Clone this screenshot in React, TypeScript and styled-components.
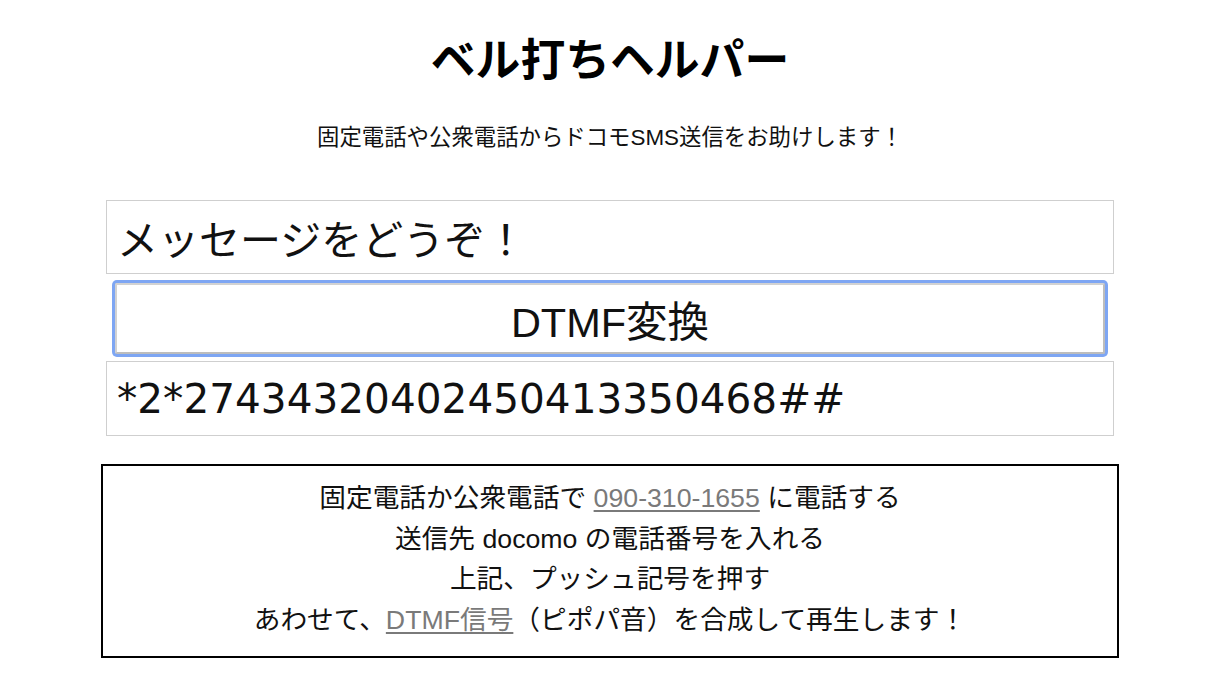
import React, { useState } from "react";
import styled, { createGlobalStyle } from "styled-components";

const Global = createGlobalStyle`
  html, body { margin: 0; padding: 0; background: #fff; }
  body {
    font-family: "Liberation Sans", "Noto Sans CJK JP", sans-serif;
    color: #111;
  }
`;

const Page = styled.main`
  display: flex;
  flex-direction: column;
  align-items: center;
  padding-top: 34px;
`;

const Title = styled.h1`
  margin: 0;
  font-size: 44.8px;
  line-height: 53px;
  font-weight: 700;
  color: #000;
`;

const Lead = styled.p`
  margin: 34px 0 0;
  font-size: 22.4px;
  line-height: 33px;
`;

const Form = styled.div`
  margin-top: 46px;
  width: 1008px;
  display: flex;
  flex-direction: column;
  align-items: center;
`;

const Field = styled.input<{ $h: number; $code?: boolean }>`
  box-sizing: border-box;
  width: 100%;
  height: ${(p) => p.$h}px;
  border: 1px solid #cfcfcf;
  padding: 0 10px;
  font-family: ${(p) =>
    p.$code
      ? `"DejaVu Sans", "Noto Sans CJK JP", sans-serif`
      : `"Liberation Sans", "Noto Sans CJK JP", sans-serif`};
  font-size: ${(p) => (p.$code ? 40.6 : 41)}px;
  color: #111;
  background: #fff;
  outline: none;
`;

const ConvertButton = styled.button`
  box-sizing: border-box;
  width: 990px;
  height: 71px;
  margin: 9px 0 7px;
  background: #fff;
  border: 2px solid #d2d2d2;
  border-right-color: #bdbdbd;
  border-bottom-color: #bdbdbd;
  border-radius: 2px;
  box-shadow: 0 0 0 3px #7ea6f3;
  font-family: "Liberation Sans", "Noto Sans CJK JP", sans-serif;
  font-size: 41.5px;
  color: #111;
  cursor: pointer;
`;

const Info = styled.section`
  box-sizing: border-box;
  margin-top: 28px;
  width: 1018px;
  border: 2px solid #000;
  padding: 12px 0 16px;
  display: flex;
  flex-direction: column;
  align-items: center;
`;

const Line = styled.p`
  margin: 0;
  font-size: 26.7px;
  line-height: 40.5px;
  text-align: center;
`;

const Link = styled.a`
  color: #7a7a7a;
  text-decoration: underline;
  text-underline-offset: 3px;
`;

export default function App() {
  const [msg, setMsg] = useState("メッセージをどうぞ！");
  const [code, setCode] = useState("*2*27434320402450413350468##");
  return (
    <>
      <Global />
      <Page>
        <Title>ベル打ちヘルパー</Title>
        <Lead>固定電話や公衆電話からドコモSMS送信をお助けします！</Lead>
        <Form>
          <Field $h={74} value={msg} onChange={(e) => setMsg(e.target.value)} />
          <ConvertButton type="button">DTMF変換</ConvertButton>
          <Field $h={75} $code value={code} onChange={(e) => setCode(e.target.value)} />
        </Form>
        <Info>
          <Line>
            固定電話か公衆電話で <Link href="#">090-310-1655</Link> に電話する
          </Line>
          <Line>送信先 docomo の電話番号を入れる</Line>
          <Line>上記、プッシュ記号を押す</Line>
          <Line>
            あわせて、<Link href="#">DTMF信号</Link>（ピポパ音）を合成して再生します！
          </Line>
        </Info>
      </Page>
    </>
  );
}
